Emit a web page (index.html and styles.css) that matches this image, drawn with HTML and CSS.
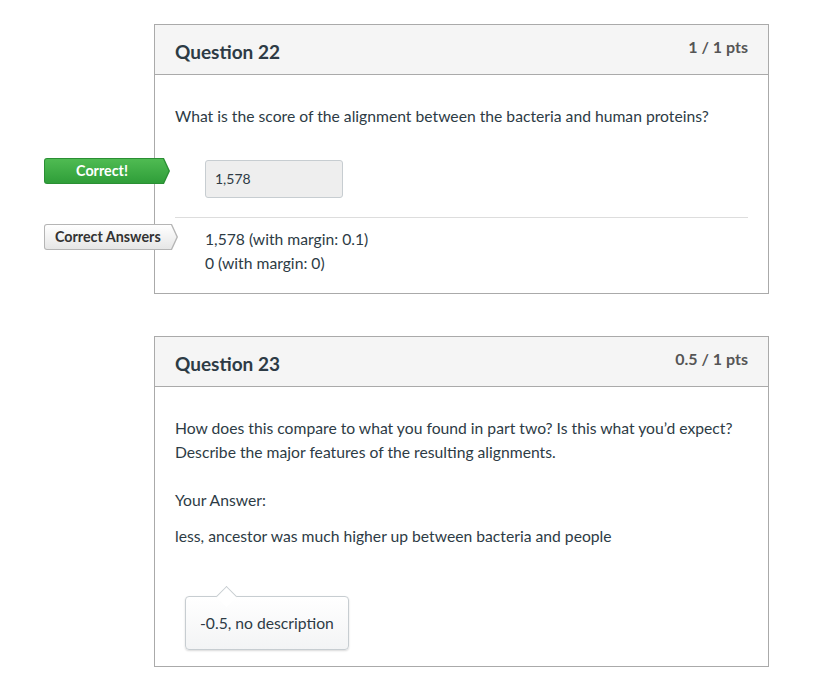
FILE: index.html
```html
<!DOCTYPE html>
<html>
<head>
<meta charset="utf-8">
<link rel="stylesheet" href="styles.css">
</head>
<body>
<div class="page">
  <div class="card">
    <div class="card-header">
      <h2 class="title">Question 22</h2>
      <span class="pts">1 / 1 pts</span>
    </div>
    <div class="card-body">
      <p class="question">What is the score of the alignment between the bacteria and human proteins?</p>
      <div class="answer-row first-row">
        <span class="flag flag-correct"><span class="flag-text">Correct!</span></span>
        <div class="answer-box">1,578</div>
      </div>
      <div class="divider"></div>
      <div class="answer-row correct-answers">
        <span class="flag flag-answers"><span class="flag-text">Correct Answers</span></span>
        <div class="answer-list">
          <div>1,578 (with margin: 0.1)</div>
          <div>0 (with margin: 0)</div>
        </div>
      </div>
    </div>
  </div>

  <div class="card card-2">
    <div class="card-header">
      <h2 class="title">Question 23</h2>
      <span class="pts">0.5 / 1 pts</span>
    </div>
    <div class="card-body body-2">
      <p class="question">How does this compare to what you found in part two? Is this what you’d expect? Describe the major features of the resulting alignments.</p>
      <p class="your-answer">Your Answer:</p>
      <p class="essay">less, ancestor was much higher up between bacteria and people</p>
      <div class="comment">-0.5, no description</div>
    </div>
  </div>
</div>
</body>
</html>
```
FILE: styles.css
```css
* { box-sizing: border-box; }
html, body { margin: 0; padding: 0; background: #fff; }
body {
  font-family: Lato, "Open Sans", sans-serif;
  color: #2d3b45;
  font-size: 15.7px;
}
.page {
  padding: 24px 0 0 154px;
}
.card {
  width: 615px;
  border: 1px solid #aaa;
  background: #fff;
}
.card-2 { margin-top: 42px; }
.card-header {
  height: 50px;
  background: #f5f5f5;
  border-bottom: 1px solid #aaa;
  display: flex;
  justify-content: space-between;
  padding: 0 20px;
}
.title {
  margin: 0;
  font-size: 19px;
  font-weight: 700;
  line-height: 20px;
  padding-top: 17px;
}
.pts {
  font-size: 16px;
  font-weight: 700;
  color: #555;
  line-height: 20px;
  padding-top: 12px;
}
.card-body {
  padding: 29px 20px 18px 20px;
}
.question {
  margin: 0;
  line-height: 24px;
}
.answer-row {
  position: relative;
  padding-left: 30px;
}
.first-row { margin-top: 32px; }
.answer-box {
  width: 138px;
  height: 38px;
  border: 1px solid #c7cdd1;
  border-radius: 3px;
  background: #eee;
  font-size: 14px;
  line-height: 36px;
  padding-left: 9px;
}
.divider {
  height: 1px;
  background: #ddd;
  margin-top: 19px;
}
.correct-answers { padding-top: 9px; }
.answer-list div { line-height: 24px; }

.flag {
  position: absolute;
  left: -131px;
  height: 26px;
  font-size: 14.3px;
  font-weight: 700;
  line-height: 25px;
  border-radius: 3px 0 0 3px;
  clip-path: polygon(0 0, calc(100% - 6px) 0, 100% 50%, calc(100% - 6px) 100%, 0 100%);
}
.flag::before {
  content: "";
  position: absolute;
  top: 1px;
  left: 1px;
  right: 1.5px;
  bottom: 1px;
  border-radius: 2px 0 0 2px;
  clip-path: polygon(0 0, calc(100% - 5.5px) 0, 100% 50%, calc(100% - 5.5px) 100%, 0 100%);
}
.flag-text { position: relative; }
.flag-correct {
  top: -2px;
  width: 126px;
  background: #2a8f34;
  color: #fff;
  text-align: center;
  padding-right: 10px;
}
.flag-correct::before {
  background: linear-gradient(#4fbb52, #2f9e39);
}
.flag-answers {
  top: 6px;
  width: 134px;
  background: #b5b5b5;
  color: #333;
  padding-left: 11px;
}
.flag-answers::before {
  background: linear-gradient(#ffffff, #e6e6e6);
}

.body-2 { padding-bottom: 16px; }
.your-answer {
  margin: 24px 0 0 0;
  line-height: 24px;
}
.essay {
  margin: 12px 0 0 0;
  line-height: 24px;
}
.comment {
  position: relative;
  margin: 48px 0 0 10px;
  width: 164px;
  height: 54px;
  border: 1px solid #c7cdd1;
  border-radius: 4px;
  background: linear-gradient(#fff, #f3f4f5);
  box-shadow: 0 1px 2px rgba(0,0,0,0.15);
  line-height: 52px;
  padding-left: 14px;
}
.comment::before {
  content: "";
  position: absolute;
  top: -8px;
  left: 33px;
  width: 14px;
  height: 14px;
  background: #fff;
  border-top: 1px solid #c7cdd1;
  border-left: 1px solid #c7cdd1;
  transform: rotate(45deg);
}
```
